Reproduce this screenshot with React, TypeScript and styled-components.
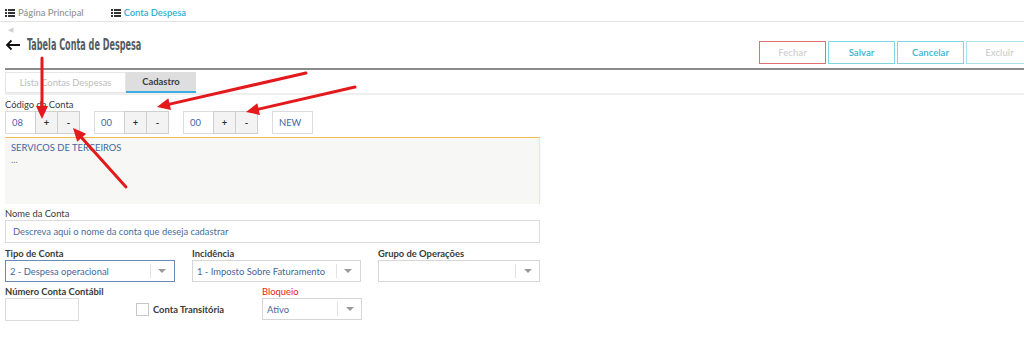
import React from "react";
import styled, { createGlobalStyle } from "styled-components";

const GlobalStyle = createGlobalStyle`
  html, body {
    margin: 0;
    padding: 0;
    background: #ffffff;
  }
  body {
    font-family: "Lato", "Open Sans", sans-serif;
    font-size: 9.4px;
    color: #333;
  }
`;

const Page = styled.div`
  position: relative;
  width: 1024px;
  height: 358px;
  overflow: hidden;
`;

const TopNav = styled.nav`
  display: flex;
  align-items: center;
  gap: 27px;
  height: 22px;
  padding: 4px 0 0 5px;
  border-bottom: 1px solid #e2e2e2;
  box-sizing: border-box;
`;

const NavItem = styled.a<{ $active?: boolean }>`
  display: flex;
  align-items: center;
  gap: 3px;
  font-weight: 600;
  font-size: 9.4px;
  color: ${(p) => (p.$active ? "#2fb0cf" : "#9a9a9a")};
  text-decoration: none;
`;

const ListIcon = () => (
  <svg width="10" height="8" viewBox="0 0 10 8" fill="#333">
    <rect x="0" y="0" width="2" height="2" />
    <rect x="3" y="0" width="7" height="2" />
    <rect x="0" y="3" width="2" height="2" />
    <rect x="3" y="3" width="7" height="2" />
    <rect x="0" y="6" width="2" height="2" />
    <rect x="3" y="6" width="7" height="2" />
  </svg>
);

const BackMini = styled.div`
  height: 12px;
  padding: 3px 0 0 8px;
  color: #cfcfcf;
  font-size: 7px;
`;

const HeaderBar = styled.header`
  display: flex;
  justify-content: space-between;
  align-items: flex-end;
  margin-left: 5px;
  padding-bottom: 4px;
  border-bottom: 2px solid #8c8c8c;
  height: 27px;
`;

const Title = styled.h1`
  display: flex;
  align-items: center;
  gap: 6px;
  margin: 0 0 10px 0;
  font-weight: 700;
  color: #545b63;
`;

const TitleText = styled.span`
  display: inline-block;
  font-family: "DejaVu Sans Condensed", "Liberation Sans Narrow", sans-serif;
  font-size: 15px;
  font-weight: 700;
  transform: scaleX(0.6);
  transform-origin: left center;
  white-space: nowrap;
`;

const Toolbar = styled.div`
  display: flex;
  gap: 2px;
  margin-right: -9px;
`;

const ToolButton = styled.button<{ $tone: "danger" | "primary" | "muted" }>`
  width: 67px;
  height: 23px;
  background: #fff;
  font-family: "Lato", "Open Sans", sans-serif;
  font-size: 9.6px;
  font-weight: 600;
  padding: 0;
  border: 1px solid
    ${(p) =>
      p.$tone === "danger" ? "#e07070" : p.$tone === "primary" ? "#7fd6e2" : "#a9e3ea"};
  color: ${(p) => (p.$tone === "primary" ? "#3cb4cf" : "#d0d0d0")};
`;

const Tabs = styled.div`
  display: flex;
  margin: 2px 0 0 5px;
  border-bottom: 2px solid #eeeeee;
`;

const Tab = styled.div<{ $active?: boolean }>`
  box-sizing: border-box;
  height: 21px;
  display: flex;
  align-items: center;
  justify-content: center;
  width: ${(p) => (p.$active ? "70px" : "121px")};
  font-size: 9.4px;
  font-weight: ${(p) => (p.$active ? 700 : 400)};
  color: ${(p) => (p.$active ? "#3d3d3d" : "#bdbdbd")};
  background: ${(p) => (p.$active ? "#dedede" : "#ffffff")};
  border: ${(p) => (p.$active ? "none" : "1px solid #e6e6e6")};
  border-bottom: ${(p) => (p.$active ? "2px solid #3aaee2" : "1px solid #e6e6e6")};
`;

const Form = styled.div`
  padding: 4px 0 0 5px;
  width: 535px;
`;

const Label = styled.div<{ $bold?: boolean; $red?: boolean }>`
  font-size: 9.4px;
  line-height: 12px;
  height: 12px;
  white-space: nowrap;
  font-weight: ${(p) => (p.$bold ? 700 : 400)};
  color: ${(p) => (p.$red ? "#f01818" : "#3a3a3a")};
`;

const CodeRow = styled.div`
  display: flex;
  align-items: center;
  gap: 14px;
`;

const Stepper = styled.div`
  display: flex;
`;

const Box = styled.div<{ $w: number; $btn?: boolean }>`
  box-sizing: border-box;
  width: ${(p) => p.$w}px;
  height: 23px;
  display: flex;
  align-items: center;
  justify-content: ${(p) => (p.$btn ? "center" : "flex-start")};
  padding-left: ${(p) => (p.$btn ? 0 : 6)}px;
  border: 1px solid ${(p) => (p.$btn ? "#cfcfcf" : "#dcdcdc")};
  margin-left: ${(p) => (p.$btn ? -1 : 0)}px;
  background: ${(p) => (p.$btn ? "#f3f3f3" : "#fff")};
  color: ${(p) => (p.$btn ? "#333" : "#3f67a4")};
  font-size: 9.4px;
  font-weight: ${(p) => (p.$btn ? 700 : 400)};
`;

const Notes = styled.div`
  box-sizing: border-box;
  margin-top: 3px;
  height: 67px;
  background: #f7f7f5;
  border-top: 1px solid #f4bd4d;
  border-right: 1px solid #fbe3b6;
  padding: 4px 6px;
  color: #4267a0;
  font-size: 9.4px;
  line-height: 12px;
`;

const Dots = styled.span`
  color: #777;
`;

const Field = styled.div<{ $w?: number }>`
  display: flex;
  flex-direction: column;
  width: ${(p) => (p.$w ? `${p.$w}px` : "auto")};
`;

const TextInput = styled.div<{ $w?: number }>`
  box-sizing: border-box;
  height: 23px;
  width: ${(p) => (p.$w ? `${p.$w}px` : "100%")};
  border: 1px solid #dcdcdc;
  display: flex;
  align-items: center;
  padding-left: 7px;
  color: #4a6c9e;
  font-size: 9.4px;
`;

const Row = styled.div<{ $gap: number }>`
  display: flex;
  gap: ${(p) => p.$gap}px;
  align-items: flex-start;
`;

const SelectBox = styled.div<{ $focus?: boolean }>`
  box-sizing: border-box;
  height: 22px;
  display: flex;
  align-items: center;
  border: 1px solid ${(p) => (p.$focus ? "#6a8bb4" : "#d6d6d6")};
  color: #45679a;
  font-size: 9.4px;
`;

const SelectText = styled.div`
  flex: 1;
  padding-left: 4px;
  white-space: nowrap;
  overflow: hidden;
`;

const SelectArrow = styled.div`
  width: 23px;
  height: 14px;
  border-left: 1px solid #e2e2e2;
  display: flex;
  align-items: center;
  justify-content: center;
  &::after {
    content: "";
    border-left: 4px solid transparent;
    border-right: 4px solid transparent;
    border-top: 4px solid #9a9a9a;
  }
`;

const Check = styled.div`
  display: flex;
  align-items: center;
  gap: 4px;
  margin-top: 17px;
  font-weight: 700;
  font-size: 9.4px;
  color: #3a3a3a;
`;

const CheckBox = styled.span`
  box-sizing: border-box;
  width: 13px;
  height: 13px;
  border: 1px solid #c8c8c8;
  background: #fff;
`;

const Overlay = styled.svg`
  position: absolute;
  left: 0;
  top: 0;
  pointer-events: none;
`;

function Select({ value, focus }: { value?: string; focus?: boolean }) {
  return (
    <SelectBox $focus={focus}>
      <SelectText>{value}</SelectText>
      <SelectArrow />
    </SelectBox>
  );
}

function CodeStepper({ value }: { value: string }) {
  return (
    <Stepper>
      <Box $w={31}>{value}</Box>
      <Box $w={23} $btn>+</Box>
      <Box $w={23} $btn>-</Box>
    </Stepper>
  );
}

const arrows = [
  { x1: 42, y1: 58, x2: 42, y2: 119 },
  { x1: 306, y1: 73, x2: 157, y2: 107 },
  { x1: 355, y1: 87, x2: 246, y2: 112 },
  { x1: 126, y1: 187, x2: 73, y2: 128 },
];

function Annotations() {
  return (
    <Overlay width="1024" height="358" viewBox="0 0 1024 358">
      {arrows.map((a, i) => {
        const ang = Math.atan2(a.y2 - a.y1, a.x2 - a.x1);
        const len = 13;
        const wid = 6;
        const bx = a.x2 - len * Math.cos(ang);
        const by = a.y2 - len * Math.sin(ang);
        const px = -Math.sin(ang) * wid;
        const py = Math.cos(ang) * wid;
        return (
          <g key={i}>
            <line x1={a.x1} y1={a.y1} x2={bx} y2={by} stroke="#e3191c" strokeWidth="3" strokeLinecap="round" />
            <polygon
              points={`${a.x2},${a.y2} ${bx + px},${by + py} ${bx - px},${by - py}`}
              fill="#e3191c"
            />
          </g>
        );
      })}
    </Overlay>
  );
}

export default function App() {
  return (
    <Page>
      <GlobalStyle />
      <TopNav>
        <NavItem>
          <ListIcon />
          Página Principal
        </NavItem>
        <NavItem $active>
          <ListIcon />
          Conta Despesa
        </NavItem>
      </TopNav>
      <BackMini>◀</BackMini>
      <HeaderBar>
        <Title>
          <svg width="16" height="12" viewBox="0 0 16 12">
            <path d="M15 6H2M6.5 1.5L2 6l4.5 4.5" stroke="#111" strokeWidth="1.8" fill="none" />
          </svg>
          <TitleText>Tabela Conta de Despesa</TitleText>
        </Title>
        <Toolbar>
          <ToolButton $tone="danger">Fechar</ToolButton>
          <ToolButton $tone="primary">Salvar</ToolButton>
          <ToolButton $tone="primary">Cancelar</ToolButton>
          <ToolButton $tone="muted">Excluir</ToolButton>
        </Toolbar>
      </HeaderBar>
      <Tabs>
        <Tab>Lista Contas Despesas</Tab>
        <Tab $active>Cadastro</Tab>
      </Tabs>
      <Form>
        <Label>Código da Conta</Label>
        <CodeRow>
          <CodeStepper value="08" />
          <CodeStepper value="00" />
          <CodeStepper value="00" />
          <Box $w={41}>NEW</Box>
        </CodeRow>
        <Notes>
          SERVICOS DE TERCEIROS
          <br />
          <Dots>...</Dots>
        </Notes>
        <Field style={{ marginTop: 4 }}>
          <Label>Nome da Conta</Label>
          <TextInput>Descreva aqui o nome da conta que deseja cadastrar</TextInput>
        </Field>
        <Row $gap={17} style={{ marginTop: 5 }}>
          <Field $w={171}>
            <Label $bold>Tipo de Conta</Label>
            <Select value="2 - Despesa operacional" focus />
          </Field>
          <Field $w={170}>
            <Label $bold>Incidência</Label>
            <Select value="1 - Imposto Sobre Faturamento" />
          </Field>
          <Field $w={163}>
            <Label $bold>Grupo de Operações</Label>
            <Select />
          </Field>
        </Row>
        <Row $gap={57} style={{ marginTop: 4 }}>
          <Field $w={74}>
            <Label $bold>Número Conta Contábil</Label>
            <TextInput $w={74} />
          </Field>
          <Check>
            <CheckBox />
            Conta Transitória
          </Check>
          <Field $w={100} style={{ marginLeft: -19 }}>
            <Label $red>Bloqueio</Label>
            <Select value="Ativo" />
          </Field>
        </Row>
      </Form>
      <Annotations />
    </Page>
  );
}
